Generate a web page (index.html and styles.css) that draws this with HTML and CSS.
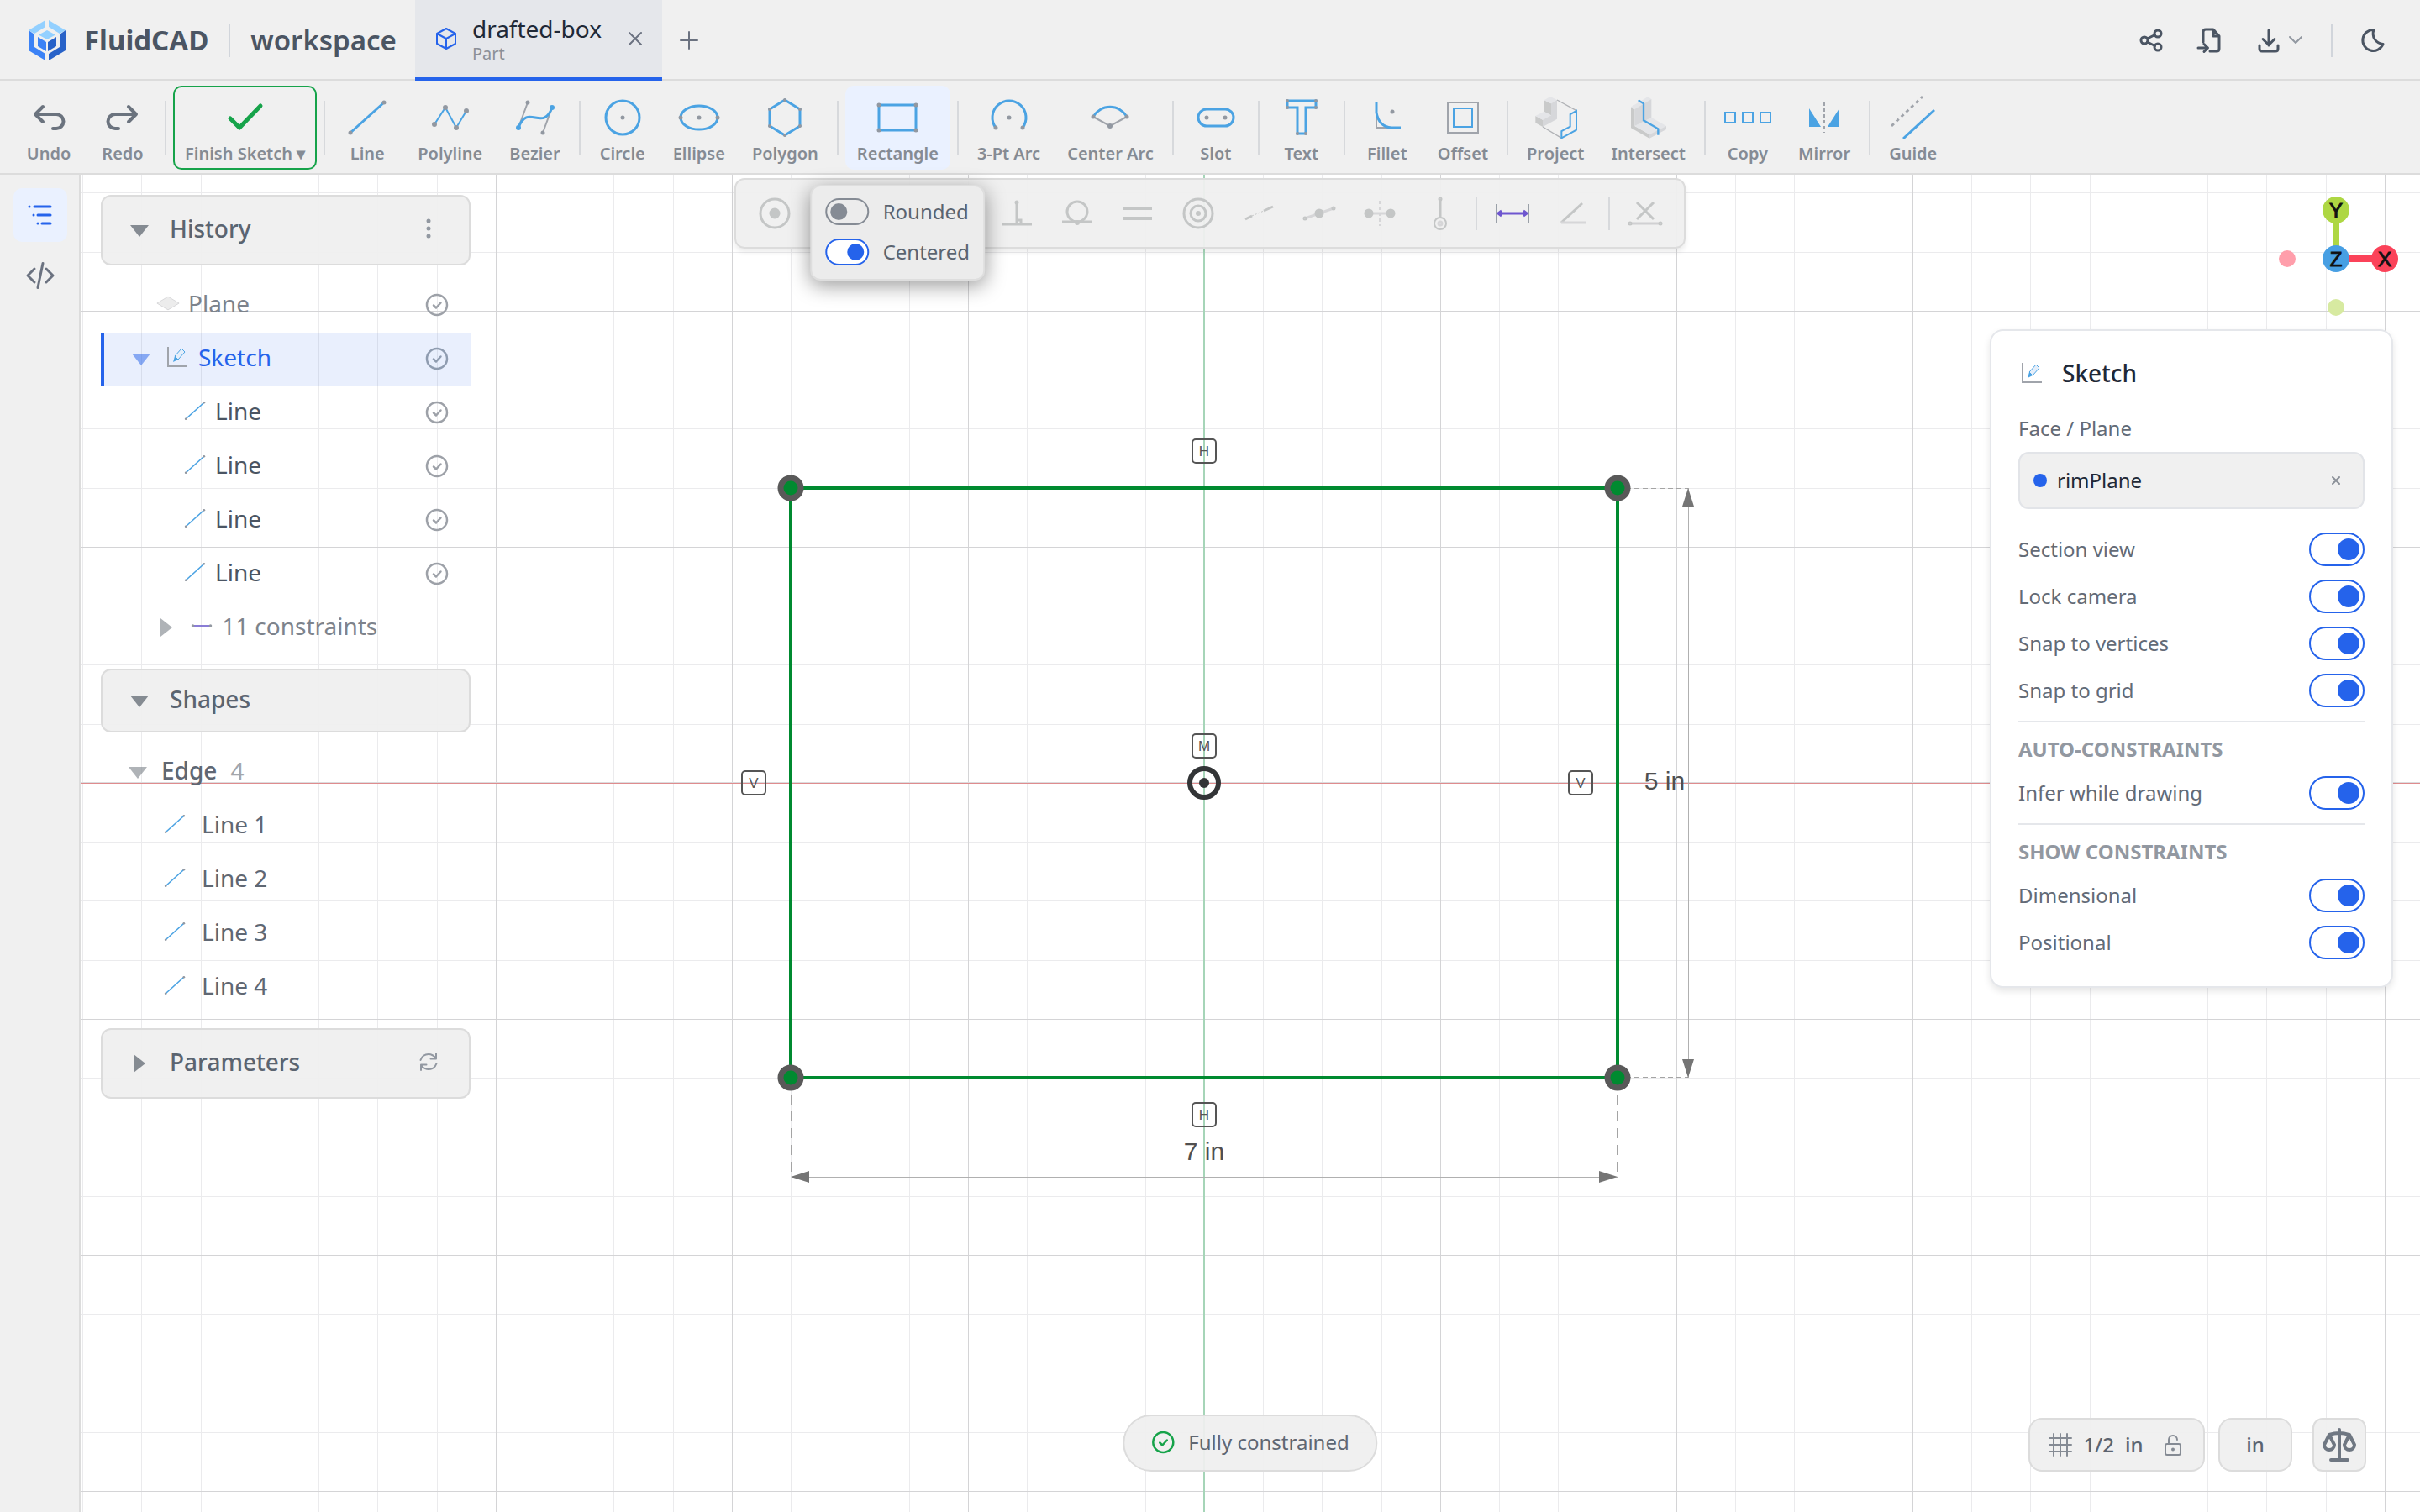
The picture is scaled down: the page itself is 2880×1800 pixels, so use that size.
FILE: index.html
```html
<!DOCTYPE html>
<html lang="en">
<head>
<meta charset="utf-8">
<title>FluidCAD - drafted-box</title>
<link rel="stylesheet" href="styles.css">
</head>
<body>
<svg class="defs" aria-hidden="true">
  <symbol id="i-line" viewBox="0 0 48 48"><path class="b" d="M4 42 44 6"/><g class="d"><circle cx="4" cy="42" r="2.5"/><circle cx="44" cy="6" r="2.5"/></g></symbol>
  <symbol id="i-check" viewBox="0 0 28 28"><g fill="none" stroke="currentColor" stroke-width="2.5" stroke-linecap="round" stroke-linejoin="round"><circle cx="14" cy="14" r="12"/><path d="m10 14.500 3 3 5.500-6"/></g></symbol>
  <symbol id="i-down" viewBox="0 0 24 24"><path fill="currentColor" d="M1 6h22L12 20z"/></symbol>
  <symbol id="i-right" viewBox="0 0 24 24"><path fill="currentColor" d="M5 1v22l14-11z"/></symbol>
  <symbol id="i-sketch" viewBox="0 0 28 28"><path class="g" d="M3 2v23h23"/><path fill="#4ba3e3" d="m9 20 2-7 4 4z"/><path fill="#e4eefa" stroke="#4ba3e3" d="m11 13 8-9 4 4-8 9z"/></symbol>
</svg>

<header class="topbar">
  <a class="brand" href="#">
    <svg class="logo" viewBox="0 0 44 48">
      <path fill="#93d0ff" d="M20 0v8L7 16l-7-4zM24 0v8l13 8 7-4z"/>
      <path fill="#3b82f6" d="m0 12 7 5v15l13 8v8L0 36z"/><path fill="#2862c8" d="m44 12-7 5v15l-13 8v8l20-12z"/>
      <path fill="#93d0ff" d="m22 12 10 5.500L22 23l-10-5.500z"/><path fill="#3b82f6" d="m11 20 10 6v11l-10-6z"/><path fill="#2862c8" d="m33 20-10 6v11l10-6z"/>
    </svg>
    <span>FluidCAD</span>
  </a>
  <i class="vline"></i>
  <a class="workspace" href="#">workspace</a>
  <div class="tab">
    <svg class="cube" viewBox="0 0 26 28"><path d="M13 2 2 8v12l11 6 11-6V8zM2 8l11 6 11-6M13 14v12"/></svg>
    <div class="tab-text"><span class="tab-name">drafted-box</span><span class="tab-kind">Part</span></div>
    <button class="plain" aria-label="Close tab"><svg class="s16" viewBox="0 0 16 16"><path d="m1 1 14 14M15 1 1 15"/></svg></button>
  </div>
  <button class="plain add" aria-label="New tab"><svg class="s20" viewBox="0 0 20 20"><path d="M10 0v20M0 10h20"/></svg></button>
  <nav class="actions">
    <button class="plain" aria-label="Share"><svg class="s28" viewBox="0 0 28 28"><circle cx="6" cy="14" r="4"/><circle cx="22" cy="6" r="4"/><circle cx="22" cy="22" r="4"/><path d="m9.500 12 9-4.500M9.500 16l9 4.500"/></svg></button>
    <button class="plain" aria-label="Import"><svg class="s28" viewBox="0 0 28 28"><path d="M6 16V4q0-3 3-3h9l7 8v15q0 3-3 3h-8M18 1v8h7M0 23h11M7 18.500l4.500 4.500L7 27.500"/></svg></button>
    <button class="plain download" aria-label="Download"><svg class="s28" viewBox="0 0 28 28"><path d="M14 2v18M7 12.500l7 7 7-7M3 20v4q0 3 3 3h16q3 0 3-3v-4"/></svg><svg class="s16 soft" viewBox="0 0 16 16"><path d="m1 4 7 7 7-7"/></svg></button>
    <i class="vline"></i>
    <button class="plain" aria-label="Dark mode"><svg class="s28" viewBox="0 0 28 28"><path d="M15 1.500A12.500 12.500 0 1 0 26 18.500 12.500 12.500 0 0 1 15 1.500z"/></svg></button>
  </nav>
</header>

<div class="toolbar">
  <button class="tool"><svg viewBox="0 0 48 48"><path class="k" d="m17 11-9 9 9 9M8 20h25a8.500 8.500 0 0 1 0 17h-4"/></svg>Undo</button>
  <button class="tool"><svg viewBox="0 0 48 48"><path class="k" d="m31 11 9 9-9 9M40 20H15a8.500 8.500 0 0 0 0 17h4"/></svg>Redo</button>
  <i class="sep"></i>
  <button class="tool finish"><svg viewBox="0 0 48 48"><path d="m6 25 11 11L42 10"/></svg><span>Finish Sketch <small>▾</small></span></button>
  <i class="sep"></i>
  <button class="tool"><svg><use href="#i-line"/></svg>Line</button>
  <button class="tool"><svg viewBox="0 0 48 48"><path class="b2" d="m5 32 13-20 13 24 12-20"/><g class="d"><circle cx="5" cy="32" r="3"/><circle cx="18" cy="12" r="3"/><circle cx="31" cy="36" r="3"/><circle cx="43" cy="16" r="3"/></g></svg>Polyline</button>
  <button class="tool"><svg viewBox="0 0 48 48"><path class="g" d="M4 36 15 6M44 12 33 42"/><path class="b" d="M4 36C15 6 33 42 44 12"/><g class="d"><circle cx="15" cy="6" r="2.500"/><circle cx="33" cy="42" r="2.500"/></g><g fill="#4ba3e3"><circle cx="4" cy="36" r="3"/><circle cx="44" cy="12" r="3"/></g></svg>Bezier</button>
  <i class="sep"></i>
  <button class="tool"><svg viewBox="0 0 48 48"><circle class="b" cx="24" cy="24" r="20"/><circle class="d" cx="24" cy="24" r="2.500"/></svg>Circle</button>
  <button class="tool"><svg viewBox="0 0 48 48"><ellipse class="b" cx="24" cy="24" rx="22" ry="14"/><g class="d"><circle cx="24" cy="24" r="2.500"/><circle cx="2" cy="24" r="2.500"/><circle cx="46" cy="24" r="2.500"/></g></svg>Ellipse</button>
  <button class="tool"><svg viewBox="0 0 48 48"><path class="b" d="m24 3 18 11v20L24 45 6 34V14z"/><g class="d"><circle cx="24" cy="3" r="2"/><circle cx="42" cy="14" r="2"/><circle cx="42" cy="34" r="2"/><circle cx="24" cy="45" r="2"/><circle cx="6" cy="34" r="2"/><circle cx="6" cy="14" r="2"/></g></svg>Polygon</button>
  <i class="sep"></i>
  <div class="tool-menu">
    <button class="tool active"><svg viewBox="0 0 48 48"><path class="b" d="M2 9h44v30H2z"/><g class="d"><circle cx="2" cy="9" r="2.500"/><circle cx="46" cy="9" r="2.500"/><circle cx="46" cy="39" r="2.500"/><circle cx="2" cy="39" r="2.500"/></g></svg>Rectangle</button>
    <div class="popover">
      <label><input type="checkbox">Rounded</label>
      <label><input type="checkbox" checked>Centered</label>
    </div>
  </div>
  <i class="sep"></i>
  <button class="tool"><svg viewBox="0 0 48 48"><path class="b" d="M8 36a20 20 0 1 1 32 0"/><g class="d"><circle cx="24" cy="24" r="2.500"/><circle cx="8" cy="36" r="2.500"/><circle cx="40" cy="36" r="2.500"/></g></svg>3-Pt Arc</button>
  <button class="tool"><svg viewBox="0 0 48 48"><path class="g" d="m4 23 20 11 20-11"/><path class="b" d="M4 23a23 23 0 0 1 40 0"/><g class="d"><circle cx="24" cy="34" r="3"/><circle cx="4" cy="23" r="2.500"/><circle cx="44" cy="23" r="2.500"/></g></svg>Center Arc</button>
  <i class="sep"></i>
  <button class="tool"><svg viewBox="0 0 48 48"><rect class="b" x="3" y="14" width="42" height="20" rx="10"/><g class="d"><circle cx="13" cy="24" r="2.500"/><circle cx="35" cy="24" r="2.500"/></g></svg>Slot</button>
  <i class="sep"></i>
  <button class="tool"><svg viewBox="0 0 48 48"><path class="b" d="M7 4h34v8H29v31H19V12H7z"/><g class="d"><circle cx="7" cy="4" r="2"/><circle cx="41" cy="4" r="2"/><circle cx="41" cy="12" r="2"/><circle cx="29" cy="43" r="2"/><circle cx="19" cy="43" r="2"/><circle cx="7" cy="12" r="2"/></g></svg>Text</button>
  <i class="sep"></i>
  <button class="tool"><svg viewBox="0 0 48 48"><path class="g" d="M11 18v18h18"/><path class="b" d="M11 6v12q3 17 18 18h11"/><circle class="d" cx="30" cy="17" r="2.500"/></svg>Fillet</button>
  <button class="tool"><svg viewBox="0 0 48 48"><path class="g" d="M6 6h36v36H6z"/><path class="b2" d="M13 13h22v22H13z"/></svg>Offset</button>
  <i class="sep"></i>
  <button class="tool"><svg viewBox="21 48 144 144"><path fill="#c9caca" d="m53 58 25 12v42l-25-12zM22 114l26 14v25l-26-14z"/><path fill="#e4e5e8" d="m53 58 22-13 24 12-21 13zM22 114l31-16 25 14-30 16z"/><path fill="#d6d7da" d="m78 70 21-13v68l-51 28v-25l30-16z"/><path fill="none" stroke="#b0b2b6" stroke-width="4" d="m99 57 69 38M48 153l67 40"/><path fill="none" stroke="#4ba3e3" stroke-width="6" d="M168 96v68l-53 29v-25l31-16v-44z"/></svg>Project</button>
  <button class="tool"><svg viewBox="354 48 144 144"><path fill="#c9caca" d="m363 82 13 8v60l53 30v14l-66-37z"/><path fill="#e4e5e8" d="m363 82 60-36 13 8-60 36zM376 150l60-30 53 30-60 30z"/><path fill="#d6d7da" d="m376 90 60-36v66l-60 30zM429 180l60-30v12l-60 32z"/><path fill="none" stroke="#4ba3e3" stroke-width="7" d="m389 58 19 12v60l52 30v22"/></svg>Intersect</button>
  <i class="sep"></i>
  <button class="tool"><svg viewBox="0 0 48 48"><path class="b2" d="M-3 18H9v12H-3zM18 18h12v12H18zM39 18h12v12H39z"/></svg>Copy</button>
  <button class="tool"><svg viewBox="0 0 48 48"><path fill="#4ba3e3" d="M6 13v22h14zM42 13v22H28z"/><path class="g" stroke-dasharray="4 3" d="M24 6v36"/></svg>Mirror</button>
  <i class="sep"></i>
  <button class="tool"><svg viewBox="0 0 48 48"><path class="g k3" stroke-dasharray="4 4" d="M-2 34 35-1"/><path class="b" d="m12 49 37-34"/></svg>Guide</button>
</div>

<main class="workarea">
  <aside class="rail">
    <button class="rail-btn on" aria-label="Outline"><svg class="s32" viewBox="0 0 32 32"><path d="M9 6h19M13 16h15M18 26h10M3 6h0M8 16h0M13 26h0"/></svg></button>
    <button class="rail-btn" aria-label="Code"><svg class="s32" viewBox="0 0 32 32"><path d="m9 8-8 8 8 8M23 8l8 8-8 8M19 1.500l-6 29"/></svg></button>
  </aside>

  <section class="stage">
    <svg class="drawing" aria-label="Sketch canvas">
      <defs>
        <pattern id="grid" x="213" y="162" width="281" height="281" patternUnits="userSpaceOnUse">
          <path fill="#ebebed" d="M70 0h1v281h-1zM140 0h1v281h-1zM211 0h1v281h-1zM0 70h281v1H0zM0 140h281v1H0zM0 211h281v1H0z"/>
          <path fill="#d4d4d6" d="M0 0h1v281H0zM0 0h281v1H0z"/>
        </pattern>
      </defs>
      <rect width="100%" height="100%" fill="url(#grid)"/>
      <rect width="100%" height="1" y="723" fill="#dcdcde"/>
      <rect width="100%" height="1" y="724" fill="#df8c8e"/>
      <rect height="100%" width="2" x="1336" fill="#a6d5b8"/>
      <g class="dim">
        <path stroke-dasharray="12 8" d="M845.500 1075v118M1828.500 1075v118"/><path stroke-dasharray="6 4" d="M1829 373.500h84M1829 1074.500h84"/>
        <path class="solid" d="M846 1193.500h983M1913.500 373v702"/>
        <path class="arrow" d="m845 1193 22-7v14zM1829 1193l-22-7v14zM1913 373l-7 22h14zM1913 1075l-7-22h14z"/>
      </g>
      <path class="edge" d="M845 373h984v702H845z"/>
      <g class="vertex"><circle cx="845" cy="373" r="12"/><circle cx="1829" cy="373" r="12"/><circle cx="1829" cy="1075" r="12"/><circle cx="845" cy="1075" r="12"/></g>
      <circle class="ring" cx="1337" cy="724" r="17"/><circle fill="#333537" cx="1337" cy="724" r="6"/>
      <g class="badge">
        <rect x="1323" y="315" width="28" height="28" rx="4"/><text x="1337" y="335">H</text>
        <rect x="1323" y="666" width="28" height="28" rx="4"/><text x="1337" y="686">M</text>
        <rect x="1323" y="1105" width="28" height="28" rx="4"/><text x="1337" y="1125">H</text>
        <rect x="787" y="710" width="28" height="28" rx="4"/><text x="801" y="730">V</text>
        <rect x="1771" y="710" width="28" height="28" rx="4"/><text x="1785" y="730">V</text>
      </g>
      <g class="measure"><text x="1337" y="1173">7 in</text><text x="1885" y="732">5 in</text></g>
    </svg>

    <div class="browser">
      <div class="card tall"><svg class="caret"><use href="#i-down"/></svg><h2>History</h2><button class="plain soft" aria-label="More"><svg class="s28" viewBox="0 0 28 28"><g fill="currentColor" stroke="none"><circle cx="14" cy="5" r="2.500"/><circle cx="14" cy="14" r="2.500"/><circle cx="14" cy="23" r="2.500"/></g></svg></button></div>
      <ul class="tree">
        <li class="l-plane faded"><svg class="ico" viewBox="0 0 32 32"><path fill="#ececec" stroke="#d4d4d6" d="m16 7 15 9-15 9-15-9z"/></svg><span>Plane</span><svg class="state"><use href="#i-check"/></svg></li>
        <li class="l-sketch selected"><svg class="caret"><use href="#i-down"/></svg><svg class="ico"><use href="#i-sketch"/></svg><span>Sketch</span><svg class="state"><use href="#i-check"/></svg></li>
        <li class="l-line"><svg class="ico thin"><use href="#i-line"/></svg><span>Line</span><svg class="state"><use href="#i-check"/></svg></li>
        <li class="l-line"><svg class="ico thin"><use href="#i-line"/></svg><span>Line</span><svg class="state"><use href="#i-check"/></svg></li>
        <li class="l-line"><svg class="ico thin"><use href="#i-line"/></svg><span>Line</span><svg class="state"><use href="#i-check"/></svg></li>
        <li class="l-line"><svg class="ico thin"><use href="#i-line"/></svg><span>Line</span><svg class="state"><use href="#i-check"/></svg></li>
        <li class="l-cons faded"><svg class="caret"><use href="#i-right"/></svg><svg class="ico" viewBox="0 0 32 32"><path fill="none" stroke="#7a6bd0" stroke-width="2" d="M4 16h24"/><g class="d"><circle cx="4" cy="16" r="2"/><circle cx="28" cy="16" r="2"/></g></svg><span>11 constraints</span></li>
      </ul>
      <div class="card"><svg class="caret"><use href="#i-down"/></svg><h2>Shapes</h2></div>
      <ul class="tree shapes">
        <li class="l-edge"><svg class="caret"><use href="#i-down"/></svg><span>Edge</span><span class="count">4</span></li>
        <li class="l-item"><svg class="ico thin"><use href="#i-line"/></svg><span>Line 1</span></li>
        <li class="l-item"><svg class="ico thin"><use href="#i-line"/></svg><span>Line 2</span></li>
        <li class="l-item"><svg class="ico thin"><use href="#i-line"/></svg><span>Line 3</span></li>
        <li class="l-item"><svg class="ico thin"><use href="#i-line"/></svg><span>Line 4</span></li>
      </ul>
      <div class="card tall"><svg class="caret"><use href="#i-right"/></svg><h2>Parameters</h2><button class="plain soft" aria-label="Refresh"><svg class="s28" viewBox="0 0 28 28"><g stroke-width="2"><path d="M4.500 12Q7 5 14 5q5 0 9 5M23 4v6.500h-6.500M23.500 16Q21 23 14 23q-5 0-9-5M5 24v-6.500h6.500"/></g></svg></button></div>
    </div>

    <svg class="gizmo" viewBox="0 0 152 152" aria-label="Orientation">
      <circle cx="18" cy="76" r="10" fill="#ff9eab"/><circle cx="76" cy="134" r="10" fill="#d7eaa1"/>
      <path d="M76 76V18" stroke="#aed743" stroke-width="8"/><path d="M76 76h58" stroke="#fb4259" stroke-width="8"/>
      <circle cx="76" cy="18" r="16" fill="#aed743"/><circle cx="134" cy="76" r="16" fill="#fb4259"/><circle cx="76" cy="76" r="16" fill="#479fe3"/>
      <text x="76" y="27">Y</text><text x="134" y="85">X</text><text x="76" y="85">Z</text>
    </svg>

    <section class="props">
      <h3><svg class="s28 pic"><use href="#i-sketch"/></svg>Sketch</h3>
      <p class="label">Face / Plane</p>
      <div class="field"><i></i><span>rimPlane</span><button class="plain" aria-label="Clear plane"><svg class="s12" viewBox="0 0 12 12"><path d="m2 2 8 8M10 2l-8 8"/></svg></button></div>
      <div class="rows">
        <label>Section view<input type="checkbox" checked></label>
        <label>Lock camera<input type="checkbox" checked></label>
        <label>Snap to vertices<input type="checkbox" checked></label>
        <label>Snap to grid<input type="checkbox" checked></label>
      </div>
      <h4>AUTO-CONSTRAINTS</h4>
      <div class="rows"><label>Infer while drawing<input type="checkbox" checked></label></div>
      <h4>SHOW CONSTRAINTS</h4>
      <div class="rows">
        <label>Dimensional<input type="checkbox" checked></label>
        <label>Positional<input type="checkbox" checked></label>
      </div>
    </section>

    <p class="status"><svg class="s28 pic"><use href="#i-check"/></svg>Fully constrained</p>

    <div class="units">
      <button class="chip grid-chip"><svg class="s28" viewBox="0 0 28 28"><path d="M6 1v26M14 1v26M22 1v26M1 6h26M1 14h26M1 22h26"/></svg><span>1/2</span><span>in</span><svg class="s28 lock" viewBox="0 0 28 28"><rect x="5" y="13" width="18" height="13" rx="2"/><path d="M9 13V8a5 5 0 0 1 10 0"/><circle cx="14" cy="19.500" r="1"/></svg></button>
      <button class="chip">in</button>
      <button class="chip scale" aria-label="Measure"><svg class="s44" viewBox="0 0 44 44"><path d="M22 4v36M12 40h20M10 10q12-4 24 0M10 10l-6 12a6 6 0 1 0 12 0zM34 10l-6 12a6 6 0 1 0 12 0z"/></svg></button>
    </div>
  </section>

  <div class="constraints">
    <button disabled aria-label="Coincident"><svg viewBox="-20 -20 40 40"><circle r="17"/><circle r="5" class="f"/></svg></button>
    <button disabled aria-label="Horizontal"><svg viewBox="-20 -20 40 40"><path d="M-17 0h34"/></svg></button>
    <button disabled aria-label="Vertical"><svg viewBox="-20 -20 40 40"><path d="M0-14v28"/></svg></button>
    <button disabled aria-label="Parallel"><svg viewBox="-20 -20 40 40"><path d="M-12 12-2-12M2 12l10-24"/></svg></button>
    <button disabled aria-label="Perpendicular"><svg viewBox="-20 -20 40 40"><path d="M-18 13h36M0-13v26M0 8h5v5"/><circle r="1" cy="-13"/></svg></button>
    <button disabled aria-label="Tangent"><svg viewBox="-20 -20 40 40"><circle cy="-2" r="12"/><path d="M-18 10h36"/><circle cy="11" r="1.500"/></svg></button>
    <button disabled aria-label="Equal"><svg viewBox="-20 -20 40 40"><path stroke-width="4" d="M-17-6h34M-17 6h34"/></svg></button>
    <button disabled aria-label="Concentric"><svg viewBox="-20 -20 40 40"><circle r="17"/><circle r="9"/><circle r="1.500"/></svg></button>
    <button disabled aria-label="Collinear"><svg viewBox="-20 -20 40 40"><path d="m-16 7 8-4M6-3l11-5"/><path stroke-width="1" stroke-dasharray="2 2" d="M-8 3 6-3"/></svg></button>
    <button disabled aria-label="Midpoint"><svg viewBox="-20 -20 40 40"><path stroke="#d6d6d8" d="m-17 6 34-12"/><circle r="4" class="f"/><circle cx="-17" cy="6" r="1"/><circle cx="17" cy="-6" r="1"/></svg></button>
    <button disabled aria-label="Symmetric"><svg viewBox="-20 -20 40 40"><path stroke="#d6d6d8" d="M-13 0h26"/><path stroke="#d6d6d8" stroke-width="2" stroke-dasharray="4 3" d="M0-15v30"/><circle cx="-13" r="4" class="f"/><circle cx="13" r="4" class="f"/></svg></button>
    <button disabled aria-label="Point on line"><svg viewBox="-20 -20 40 40"><path d="M0-17V6"/><circle cy="-17" r="1"/><circle cy="12" r="7" stroke-width="2"/><circle cy="12" r="2" stroke="#d6d6d8"/></svg></button>
    <i class="sep"></i>
    <button aria-label="Dimension"><svg viewBox="-20 -20 40 40"><path stroke="#9aa0a8" stroke-width="2" d="M-19-11v22M19-11v22"/><path stroke="#6e56cf" d="M-16 0h32M-13-3l-4 3 4 3M13-3l4 3-4 3"/></svg></button>
    <button disabled aria-label="Angle"><svg viewBox="-20 -20 40 40"><path d="M11-12-14 11"/><path stroke="#d6d6d8" d="M-14 11h30"/></svg></button>
    <i class="sep"></i>
    <button disabled aria-label="Remove constraints"><svg viewBox="-20 -20 40 40"><path d="m-10-13 20 20M10-13l-20 20"/><path stroke="#d0d0d2" d="M-17 12h34"/><circle cx="-18" cy="12" r="1"/><circle cx="18" cy="12" r="1"/></svg></button>
  </div>
</main>
</body>
</html>
```
FILE: styles.css
```css
* { box-sizing: border-box; }
body {
  margin: 0;
  min-height: 100vh;
  display: flex;
  flex-direction: column;
  background: #fff;
  color: #4b5563;
  font: 24px/32px "Noto Sans", sans-serif;
}
button { font: inherit; color: inherit; border: 0; background: none; padding: 0; cursor: pointer; }
a { color: inherit; text-decoration: none; }
h2, h3, h4, p, ul { margin: 0; padding: 0; }
ul { list-style: none; }
svg { display: block; flex: none; overflow: visible; }
.defs { position: absolute; width: 0; height: 0; }

/* icon strokes */
.b { fill: none; stroke: #4ba3e3; stroke-width: 3; }
.b2 { fill: none; stroke: #4ba3e3; stroke-width: 2; }
.g { fill: none; stroke: #a0a4ab; stroke-width: 2; }
.k3 { stroke-width: 3; }
.d { fill: #9298a1; }
.k { fill: none; stroke: #6b737e; stroke-width: 4; stroke-linecap: round; stroke-linejoin: round; }
.s12 { width: 12px; height: 12px; }
.s16 { width: 16px; height: 16px; }
.s20 { width: 20px; height: 20px; }
.s28 { width: 28px; height: 28px; }
.s32 { width: 32px; height: 32px; }
.s44 { width: 44px; height: 44px; }
.plain svg, .rail-btn svg, .chip svg {
  fill: none;
  stroke: currentColor;
  stroke-width: 2;
  stroke-linecap: round;
  stroke-linejoin: round;
}

/* top bar */
.topbar { display: flex; align-items: center; height: 96px; background: #f0f0f0; box-shadow: inset 0 -2px #dcdcdc; }
.brand { display: flex; align-items: center; gap: 22px; padding-left: 34px; font-size: 33px; line-height: 48px; font-weight: 700; }
.logo { width: 44px; height: 48px; }
.topbar .vline { width: 2px; height: 40px; background: #d1d5db; }
.brand + .vline { margin: 0 24px; }
.workspace { font-size: 33px; line-height: 48px; font-weight: 600; }
.tab {
  display: flex;
  align-items: center;
  gap: 18px;
  height: 96px;
  margin-left: 22px;
  padding: 0 24px;
  background: #e5e7eb;
  border-bottom: 4px solid #2563eb;
}
.cube { width: 26px; height: 28px; fill: none; stroke: #2563eb; stroke-width: 2; stroke-linejoin: round; }
.tab-text { display: flex; flex-direction: column; }
.tab-name { font-size: 28px; line-height: 36px; color: #1f2937; }
.tab-kind { font-size: 20px; line-height: 24px; color: #8b9098; }
.tab .plain { margin-left: 14px; color: #6b7280; }
.add { margin-left: 22px; color: #6b7280; }
.actions { display: flex; align-items: center; margin-left: auto; padding-right: 42px; gap: 42px; color: #4b5563; }
.actions svg { stroke-width: 3; }
.download { display: flex; align-items: center; gap: 10px; }
.soft { color: #9298a1; }
.actions .soft { stroke-width: 2; }
.actions .download, .actions .vline { margin-right: -8px; }

/* drawing tools */
.toolbar { position: relative; z-index: 2; display: flex; gap: 4px; height: 112px; padding: 6px 16px 0; background: #f0f0f0; border-bottom: 2px solid #dcdcdc; }
.tool {
  display: flex;
  flex-direction: column;
  align-items: center;
  gap: 5px;
  min-width: 84px;
  height: 100px;
  padding: 12px 12px 3px;
  border: 2px solid transparent;
  border-radius: 10px;
  color: #858b94;
  font-size: 20px;
  line-height: 28px;
  font-weight: 600;
  white-space: nowrap;
}
.tool svg { width: 48px; height: 48px; }
.tool.active { background: #eaf1ff; }
.finish { border-color: #16a34a; }
.finish svg { fill: none; stroke: #16a34a; stroke-width: 5; stroke-linecap: round; stroke-linejoin: round; }
.finish small { font-size: 20px; }
.toolbar .sep { width: 2px; height: 64px; margin: 18px 4px 0; background: #d7d9dc; }
.tool-menu { position: relative; }
.popover {
  position: absolute;
  top: calc(100% + 14px);
  left: 50%;
  translate: -50%;
  display: flex;
  flex-direction: column;
  gap: 16px;
  padding: 14px 16px 16px;
  background: #ececec;
  border: 2px solid #dedede;
  border-radius: 12px;
  box-shadow: 0 6px 24px rgba(0, 0, 0, .4);
  color: #5b6470;
}
.popover label { display: flex; align-items: center; gap: 16px; }

/* work area */
.workarea { position: relative; flex: 1; display: flex; }
.rail { display: flex; flex-direction: column; align-items: center; gap: 8px; width: 96px; padding: 16px 0 0 2px; background: #f0f0f0; border-right: 2px solid #dcdcdc; }
.rail-btn { display: grid; place-items: center; width: 64px; height: 64px; border-radius: 10px; color: #6b7280; }
.rail-btn svg { stroke-width: 3; }
.rail-btn.on { background: #eaf1ff; color: #2563eb; }
.stage { position: relative; flex: 1; padding: 24px; overflow: hidden; }
.drawing { position: absolute; inset: 0; width: 100%; height: 100%; }
.dim path { fill: none; stroke: #a4a4a4; stroke-width: 1; }
.dim .solid { stroke: #b0b0b0; }
.dim .arrow { fill: #757575; stroke: none; }
.edge { fill: none; stroke: #008a30; stroke-width: 4; }
.vertex circle { fill: #008a30; stroke: #595959; stroke-width: 7; }
.ring { fill: none; stroke: #333537; stroke-width: 6; }
.badge rect { fill: none; stroke: #555; stroke-width: 2; }
.badge text { font: 17px "Liberation Sans", sans-serif; fill: #555; text-anchor: middle; }
.measure text { font: 30px "Liberation Sans", sans-serif; fill: #505050; text-anchor: middle; }

/* history tree */
.browser { position: relative; width: 440px; font-size: 28px; line-height: 40px; }
.card {
  display: flex;
  align-items: center;
  gap: 18px;
  height: 76px;
  padding: 0 34px 4px 26px;
  background: rgba(239, 239, 239, .95);
  border: 2px solid #dcdcdc;
  border-radius: 12px;
}
.card.tall { height: 84px; }
.card h2 { flex: 1; font-size: 28px; line-height: 40px; font-weight: 500; color: #5b6470; }
.caret { width: 36px; height: 24px; color: #858b92; position: relative; top: 2px; }
.tree { padding: 16px 0; }
.tree li { display: flex; align-items: center; gap: 8px; height: 64px; padding: 0 26px 6px 0; border-left: 4px solid transparent; }
.tree .ico { width: 32px; height: 32px; padding: 2px; }
.tree .thin { width: 32px; height: 30px; }
.tree .caret { opacity: .65; }
.state { width: 28px; height: 28px; margin-left: auto; color: #9da1a8; position: relative; top: 2px; }
.tree .l-plane { padding-left: 60px; }
.tree .l-sketch { padding-left: 26px; gap: 9px; }
.tree .l-line { padding-left: 92px; }
.tree .l-cons { padding-left: 56px; }
.tree .l-edge { padding-left: 22px; gap: 10px; }
.tree .l-item { padding-left: 68px; gap: 16px; }
.shapes { color: #5f6773; }
.count { margin-left: 6px; color: #a3a6ab; }
.l-edge { font-weight: 500; }
.l-edge .count { font-weight: 400; }
.faded { color: #7d838c; }
.tree .selected { background: rgba(37, 99, 235, .1); border-color: #2563eb; color: #2563eb; }
.selected .caret { color: #2563eb; opacity: .5; }
.selected .state { color: #8f9cb0; }

/* orientation gizmo */
.gizmo { position: absolute; top: 24px; right: 24px; width: 152px; height: 152px; }
.gizmo text { font: 24px "Liberation Sans", sans-serif; fill: #111; text-anchor: middle; stroke: #111; stroke-width: 1; }

/* properties */
.props {
  position: absolute;
  top: 184px;
  right: 32px;
  width: 480px;
  padding: 32px;
  background: #fff;
  border: 2px solid #e5e7eb;
  border-radius: 16px;
  box-shadow: 0 4px 8px rgba(0, 0, 0, .1);
  color: #636b77;
}
.props h3 { display: flex; align-items: center; gap: 22px; padding-left: 2px; font-size: 28px; line-height: 36px; font-weight: 500; color: #1f2937; }
.label { margin: 32px 0 12px; }
.field { display: flex; align-items: center; gap: 12px; height: 68px; padding: 0 26px 0 16px; background: #f0f0f0; border: 2px solid #e2e4e8; border-radius: 12px; color: #1f2937; }
.field i { width: 16px; height: 16px; border-radius: 50%; background: #2563eb; }
.field .plain { margin-left: auto; color: #8b9098; }
.rows { display: flex; flex-direction: column; gap: 16px; }
.field + .rows { margin-top: 28px; }
.rows label { display: flex; align-items: center; justify-content: space-between; height: 40px; }
.props h4 { margin: 16px 0 18px; padding-top: 18px; border-top: 2px solid #e5e7eb; font-size: 24px; line-height: 28px; font-weight: 700; color: #9298a1; }
input[type="checkbox"] {
  appearance: none;
  display: flex;
  align-items: center;
  width: 66px;
  height: 40px;
  margin: 0;
  padding: 0 4px;
  border: 2px solid #858b94;
  border-radius: 20px;
}
input[type="checkbox"]::before { content: ""; width: 26px; height: 26px; border-radius: 50%; background: #858b94; }
input[type="checkbox"]:checked { justify-content: flex-end; border-color: #2563eb; background: #fff; }
input[type="checkbox"]:checked::before { background: #2563eb; }
.popover input[type="checkbox"] { width: 52px; height: 32px; }
.popover input[type="checkbox"]::before { width: 20px; height: 20px; }

/* status and units */
.status {
  position: absolute;
  bottom: 48px;
  left: 50%;
  translate: -50%;
  display: flex;
  align-items: center;
  gap: 16px;
  height: 68px;
  padding: 0 32px 2px;
  background: rgba(239, 239, 239, .93);
  border: 2px solid #dcdcdc;
  border-radius: 34px;
  color: #5f6773;
}
.status svg { color: #16a34a; }
.units { position: absolute; right: 64px; bottom: 48px; display: flex; color: #5b6470; }
.chip { display: flex; align-items: center; justify-content: center; width: 88px; height: 64px; margin-left: 16px; background: rgba(239, 239, 239, .93); border: 2px solid #dcdcdc; border-radius: 16px; font-weight: 500; }
.grid-chip { width: 210px; gap: 13px; }
.grid-chip svg { color: #858b94; }
.lock { margin-left: 8px; }
.chip.scale { width: 64px; margin-left: 24px; border-radius: 12px; }
.scale svg { stroke-width: 4; color: #6f7782; }

/* constraint bar */
.constraints {
  position: absolute;
  top: 4px;
  left: 50%;
  translate: -50%;
  display: flex;
  align-items: center;
  gap: 4px;
  height: 84px;
  padding: 0 12px;
  background: rgba(239, 239, 239, .94);
  border: 2px solid #dcdcdc;
  border-radius: 12px;
  box-shadow: 0 4px 6px rgba(0, 0, 0, .08);
}
.constraints button { display: grid; place-items: center; width: 68px; height: 68px; }
.constraints svg { width: 40px; height: 40px; fill: none; stroke: #c4c6c6; stroke-width: 3; }
.constraints .f { fill: #c4c6c6; }
.constraints .sep { width: 2px; height: 40px; margin: 0 4px; background: #d7d9dc; }
```
